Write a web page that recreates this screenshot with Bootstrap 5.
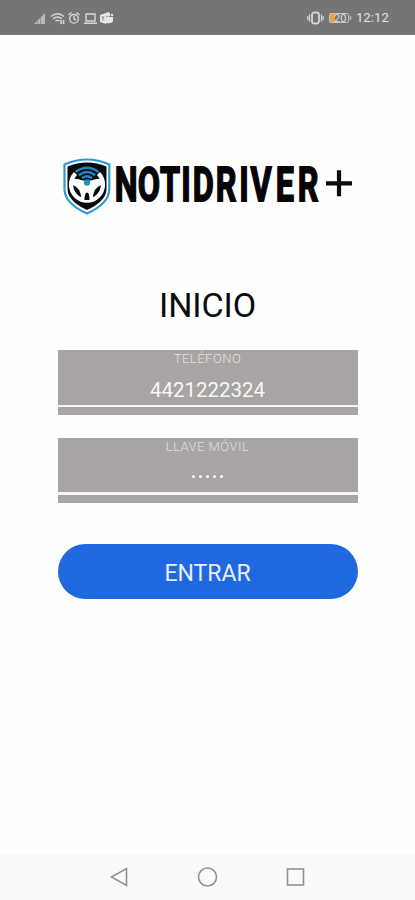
<!DOCTYPE html>
<html lang="es">
<head>
<meta charset="utf-8">
<meta name="viewport" content="width=device-width, initial-scale=1">
<title>Notidriver+</title>
<link href="https://cdn.jsdelivr.net/npm/bootstrap@5.3.0/dist/css/bootstrap.min.css" rel="stylesheet">
<style>
body{font-family:Roboto,"Liberation Sans",sans-serif;height:900px;background:#fefefe;color:#0b0b0b}
.status{height:35px;background:#757575;color:#e2e2e2;font-size:13px;padding:2px 26px 0 34px;border-bottom:1px solid #7c7c7c}
.status svg,.brand svg,.sysnav svg{display:block}
.clock{letter-spacing:.15px;margin-left:3px}
.brand{margin:110px 0 0 58px}
.screen-title{font-size:34px;line-height:40px;margin-top:62px;letter-spacing:-.1px}
.fields{width:300px;margin-top:25px}
.entry{height:65px;background:#a8a4a3;color:#f4f4f4}
.entry+.entry{margin-top:23px}
.entry label{font-size:13px;line-height:18px;color:#e2e0df;font-weight:300;letter-spacing:.5px}
.entry input{height:37px;font-size:20.5px;line-height:30px;color:#f7f7f7;background:transparent;border:0;outline:0;padding:7px 0 0}
.rule{height:2px;background:#f6f6f6}
.rule-thick{height:3px;margin-top:-1px}
.pin{height:37px;padding-top:4px;gap:3.2px}
.pin i{width:3.8px;height:3.8px;border-radius:50%;background:#fff}
.enter{width:300px;height:55px;margin-top:41px;background:#2068e0;color:#e9effb;font-size:23px;line-height:1;padding:3px 0 0}
.sysnav{height:46px;background:#fafafa;gap:67px}
</style>
<script src="https://cdn.jsdelivr.net/npm/bootstrap@5.3.0/dist/js/bootstrap.bundle.min.js"></script>
</head>
<body class="d-flex flex-column overflow-hidden m-0">
<header class="status d-flex align-items-center justify-content-between flex-shrink-0">
  <svg width="82" height="16" viewBox="0 0 82 16" fill="none" stroke="#d6d6d6" stroke-width="1.4">
    <path d="M0 14L11 3v11z" fill="#b9b9b9" stroke="none"/>
    <path d="M3.5 10v4M6.5 7v7" stroke="#858585" stroke-width=".7"/>
    <path d="M17 6.500q6.500-5.500 13 0M19 8.800q4.500-3.500 9 0M21.500 11q2-1.500 4 0"/>
    <path d="M23.500 13.500h.1M27 10v4M29.500 10v4" stroke-width="1.600"/>
    <circle cx="40" cy="8.800" r="4.300"/><path d="M40 6v3l2 1M34.500 5l3-2.500M45.500 5l-3-2.500"/>
    <path d="M52 4h9v7h-9zM50 13.300h13"/>
    <path d="M66 5l6-2v11l-6-2z" fill="#e8e8e8" stroke="none"/><circle cx="74" cy="4.500" r="2.200" fill="#e8e8e8" stroke="none"/><path d="M72 7h7v4q-1 3-7 2z" fill="#e8e8e8" stroke="none"/><path d="M67.500 7h3M69 7v4" stroke="#8b8b8b" stroke-width="1"/><circle cx="78" cy="5" r="1.200" fill="#e8e8e8" stroke="none"/>
  </svg>
  <div class="d-flex align-items-center">
    <svg width="46" height="16" viewBox="0 0 46 16" fill="none" stroke="#d6d6d6" stroke-width="1.400">
      <rect x="5" y="2.500" width="7" height="11" rx="2.500" stroke-width="1.800"/><path d="M2.500 4.500v7M14.500 4.500v7M.8 6v4M16.200 6v4" stroke-width="1.200"/>
      <rect x="22.500" y="3.500" width="19" height="9" rx="1" stroke="#c3c3c3" stroke-width="1"/><path d="M23 4h5v8h-5z" fill="#f2a12e" stroke="none"/><path d="M43.500 6v4" stroke="#c3c3c3"/>
      <text x="27" y="12" font-family="Roboto,sans-serif" font-size="11" fill="#dedede" stroke="none">20</text>
    </svg>
    <span class="clock">12:12</span>
  </div>
</header>
<main class="d-flex flex-column align-items-center flex-grow-1">
  <div class="brand align-self-start">
    <svg width="300" height="78" viewBox="58 145 300 78" role="img" aria-label="Notidriver+">
      <path d="M87 159.500Q98 159.500 109.300 164.500V190Q108.500 204 87 213.500Q65.500 204 64.500 190V164.500Q76 159.500 87 159.500Z" fill="#fff" stroke="#2d9bd3" stroke-width="2.200"/>
      <path d="M87 162.500Q97 162.500 106.500 166.500V190Q105.500 201.500 87 210Q68.500 201.500 67.500 190V166.500Q77 162.500 87 162.500Z" fill="#080b0e"/>
      <path d="M75.500 173.500A16 16 0 1 0 98.500 173.500" fill="none" stroke="#fff" stroke-width="4.200"/>
      <path d="M71 179Q77 178 83 180.500H91Q97 178 103 179L102.500 184.500Q93 187 92.500 200H81.500Q81 187 71.500 184.500Z" fill="#fff"/>
      <path d="M84.500 200Q84.500 192.500 87 192.500T89.500 200Z" fill="#080b0e"/>
      <path d="M75.500 172Q87 163.500 98.500 172M78.800 175.200Q87 169 95.200 175.200M82 178.200Q87 174.500 92 178.200" fill="none" stroke="#2583bd" stroke-width="2.400"/>
      <circle cx="87" cy="182.500" r="3.200" fill="#208fd0"/>
      <text transform="translate(115 200.500) scale(.66 1)" x="-.4 34.6 68.2 100.4 117.8 152.6 188.3 205.5 243.6 276.9" y="0" font-family="Roboto,sans-serif" font-weight="700" font-size="49" fill="#050505" stroke="#050505" stroke-width="1.800">NOTIDRIVER</text>
      <path d="M326 183.300h26M339 170.300v26" stroke="#0a0a0a" stroke-width="4.200"/>
    </svg>
  </div>
  <h1 class="screen-title fw-normal mb-0">INICIO</h1>
  <form class="fields">
    <div class="entry d-flex flex-column align-items-stretch text-center">
      <label for="phone">TELÉFONO</label>
      <input id="phone" class="text-center" type="text" value="4421222324">
      <div class="rule"></div>
    </div>
    <div class="entry d-flex flex-column align-items-stretch text-center">
      <label>LLAVE MÓVIL</label>
      <div class="pin d-flex justify-content-center align-items-center"><i></i><i></i><i></i><i></i><i></i></div>
      <div class="rule rule-thick"></div>
    </div>
    <button type="button" class="enter btn rounded-pill border-0">ENTRAR</button>
  </form>
</main>
<nav class="sysnav d-flex align-items-center justify-content-center flex-shrink-0">
  <svg width="21" height="22" viewBox="0 0 21 22" fill="none" stroke="#919191" stroke-width="1.600"><path d="M17.500 2.500v17L2.500 11z"/></svg>
  <svg width="21" height="22" viewBox="0 0 21 22" fill="none" stroke="#919191" stroke-width="1.600"><circle cx="10.500" cy="11" r="9"/></svg>
  <svg width="21" height="22" viewBox="0 0 21 22" fill="none" stroke="#919191" stroke-width="1.600"><rect x="2.500" y="3" width="16" height="16"/></svg>
</nav>
</body>
</html>
